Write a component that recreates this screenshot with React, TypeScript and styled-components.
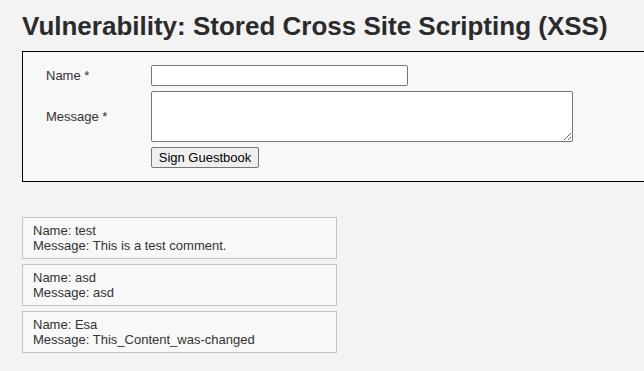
import React from 'react';
import styled, { createGlobalStyle } from 'styled-components';

const Global = createGlobalStyle`
    html, body {
        margin: 0;
        background: #f3f3f3;
    }
    body {
        font-family: "Liberation Sans", Arial, sans-serif;
        font-size: 13px;
        color: #2f2f2f;
    }
`

const entries = [
    { name: 'test', message: 'This is a test comment.' },
    { name: 'asd', message: 'asd' },
    { name: 'Esa', message: 'This_Content_was-changed' },
]

export default function App() {
    return (
        <Page>
            <Global />
            <Title>Vulnerability: Stored Cross Site Scripting (XSS)</Title>
            <CodeArea>
                <FormGrid>
                    <Label>Name *</Label>
                    <TextInput type="text" />
                    <Label>Message *</Label>
                    <TextArea />
                    <span />
                    <div><SubmitButton>Sign Guestbook</SubmitButton></div>
                </FormGrid>
            </CodeArea>
            <Entries>
                {entries.map((e, i) => (
                    <Entry key={i}>
                        Name: {e.name}<br />
                        Message: {e.message}
                    </Entry>
                ))}
            </Entries>
        </Page>
    )
}

const Page = styled.div`
    padding: 12px 0 0 22px;
    width: calc(100vw - 22px);
    height: calc(100vh - 12px);
    overflow: hidden;
`

const Title = styled.h1`
    margin: 0 0 10px 0;
    font-size: 26px;
    line-height: 29px;
    font-weight: bold;
    color: #2b2b2b;
    white-space: nowrap;
`

const CodeArea = styled.div`
    width: 700px;
    border: 1px solid #000;
    background: #f7f8f8;
    padding: 13px 0 13px 23px;
`

const FormGrid = styled.div`
    display: grid;
    grid-template-columns: 105px auto;
    row-gap: 5px;
    align-items: center;
    justify-items: start;
`

const Label = styled.span`
    font-size: 13px;
    line-height: 15px;
    color: #333;
`

const TextInput = styled.input`
    box-sizing: border-box;
    width: 257px;
    height: 21px;
    margin: 0;
    border: 1px solid #767676;
    border-radius: 2px;
    background: #fff;
    display: block;
`

const TextArea = styled.textarea`
    box-sizing: border-box;
    width: 422px;
    height: 51px;
    margin: 0;
    border: 1px solid #767676;
    border-radius: 2px;
    background: #fff;
    display: block;
`

const SubmitButton = styled.button`
    box-sizing: border-box;
    height: 21px;
    width: 108px;
    margin: 0;
    padding: 0 6px;
    font-family: "Liberation Sans", Arial, sans-serif;
    font-size: 13px;
    color: #000;
    background: #efefef;
    border: 1px solid #767676;
    border-radius: 2px;
    display: block;
`

const Entries = styled.div`
    margin-top: 35px;
    display: flex;
    flex-direction: column;
    gap: 5px;
`

const Entry = styled.div`
    box-sizing: border-box;
    width: 315px;
    height: 42px;
    padding: 5px 10px;
    line-height: 15px;
    background: #f7f8f8;
    border: 1px solid #c4c4c4;
    color: #333;
`
